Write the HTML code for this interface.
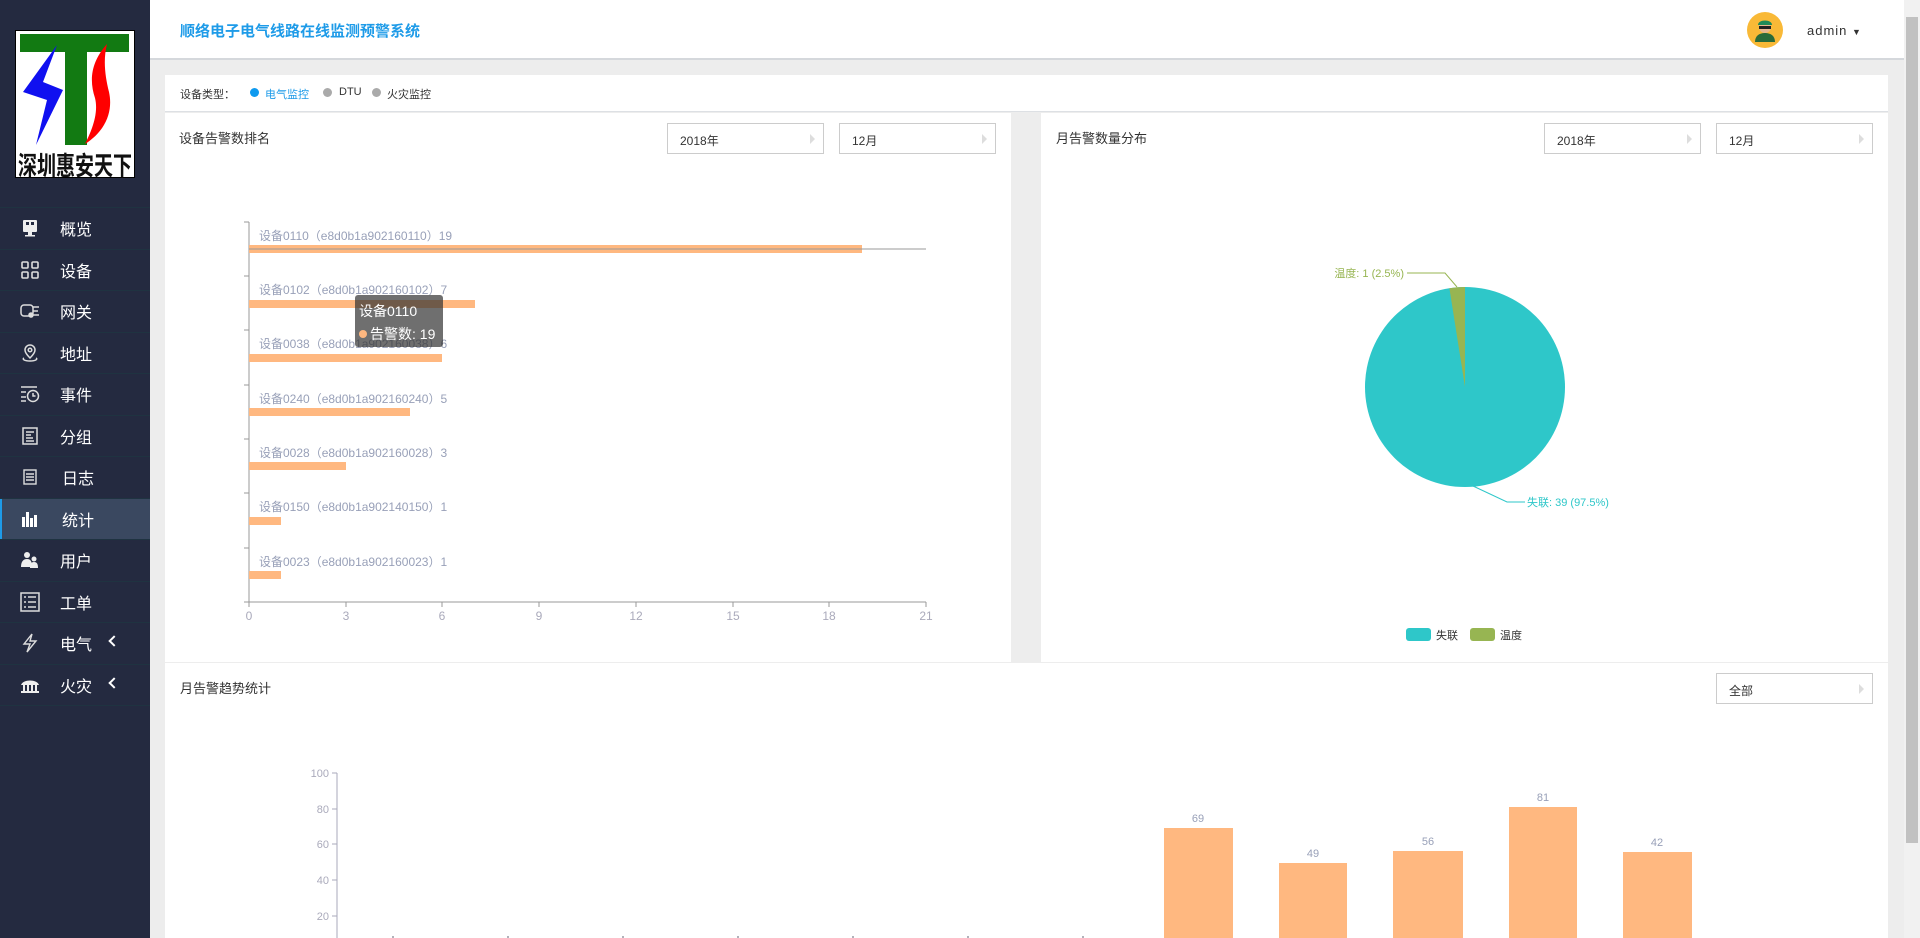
<!DOCTYPE html>
<html><head><meta charset="utf-8"><style>
*{margin:0;padding:0;box-sizing:border-box}
body{width:1920px;height:938px;overflow:hidden;background:#ededed;font-family:"Liberation Sans","Noto Sans CJK SC",sans-serif;position:relative}
.a{position:absolute}
#side{left:0;top:0;width:150px;height:938px;background:#242a40}
.mi{position:absolute;left:0;width:150px;height:41.5px;border-top:1px solid #1f3341;color:#fff;font-size:16px}
.mi span{position:absolute;left:60px;top:8px}
.mi svg{position:absolute;left:20px;top:10px}
.mi.act{background:#3a4860}
.mi.act:before{content:"";position:absolute;left:0;top:0;width:2px;height:100%;background:#1e9be8}
.mi .arr{position:absolute;left:110px;top:14px;width:8px;height:8px;border-left:2px solid #fff;border-bottom:2px solid #fff;transform:rotate(45deg)}
#hdr{left:150px;top:0;width:1754px;height:60px;background:#fff;border-bottom:2px solid #d5d8dc}
.sel{position:absolute;height:31px;border:1px solid #ccc;background:#fff;font-size:12px;color:#333;padding:8px 12px}
.sel:after{content:"";position:absolute;right:8px;top:10px;border-left:5px solid #ddd;border-top:5px solid transparent;border-bottom:5px solid transparent}
.t{font-size:13px;color:#333}
</style></head><body>
<div id="side" class="a">
 <svg class="a" style="left:15px;top:30px" width="120" height="148" viewBox="0 0 120 148">
  <rect x="0.5" y="0.5" width="119" height="147" fill="#fff" stroke="#000"/>
  <rect x="5" y="4" width="109" height="18" fill="#127a12"/>
  <rect x="50" y="20" width="22" height="95" fill="#127a12"/>
  <polygon points="42,15 8,62 32,70 21,115 48,60 28,52" fill="#1010f0"/>
  <path d="M92,14 C76,32 74,50 80,68 C84,84 76,102 70,114 C92,100 98,80 94,62 C90,46 88,30 92,14Z" fill="#f00"/>
  <text x="60" y="145" text-anchor="middle" font-size="26" font-weight="bold" fill="#111" font-family="Noto Sans CJK SC,sans-serif" textLength="114" lengthAdjust="spacingAndGlyphs">深圳惠安天下</text>
 </svg>
 <div class="mi" style="top:207px"><svg width="20" height="20" viewBox="0 0 20 20"><rect x="3" y="2" width="14" height="12" rx="1" fill="#eee"/><rect x="8" y="14" width="4" height="3" fill="#eee"/><rect x="5" y="17" width="10" height="1.5" fill="#eee"/><rect x="6" y="4" width="3" height="3" fill="#242a40"/><rect x="11" y="4" width="3" height="3" fill="#242a40"/></svg><span>概览</span></div>
 <div class="mi" style="top:249px"><svg width="20" height="20" viewBox="0 0 20 20" fill="none" stroke="#ddd" stroke-width="1.6"><rect x="2" y="2" width="6" height="6" rx="1"/><rect x="12" y="2" width="6" height="6" rx="1"/><rect x="2" y="12" width="6" height="6" rx="1"/><rect x="12" y="12" width="6" height="6" rx="1"/></svg><span>设备</span></div>
 <div class="mi" style="top:290px"><svg width="20" height="20" viewBox="0 0 20 20" fill="none" stroke="#ddd" stroke-width="1.5"><rect x="1" y="4" width="12" height="11" rx="3"/><path d="M13 6h6M13 10h5M13 14h6"/><circle cx="11" cy="14" r="2" fill="#ddd"/></svg><span>网关</span></div>
 <div class="mi" style="top:332px"><svg width="20" height="20" viewBox="0 0 20 20" fill="none" stroke="#ddd" stroke-width="1.5"><path d="M10 15C6 11 5 9 5 7a5 5 0 0110 0c0 2-1 4-5 8z"/><circle cx="10" cy="7" r="1.8"/><path d="M4 15c-2 1 0 3 6 3s8-2 6-3"/></svg><span>地址</span></div>
 <div class="mi" style="top:373px"><svg width="20" height="20" viewBox="0 0 20 20" fill="none" stroke="#ddd" stroke-width="1.5"><path d="M1 3h16M1 8h5M1 13h5M1 17h5"/><circle cx="13" cy="12" r="5.5"/><path d="M13 9v3h2.5"/></svg><span>事件</span></div>
 <div class="mi" style="top:415px"><svg width="20" height="20" viewBox="0 0 20 20" fill="none" stroke="#ddd" stroke-width="1.5"><rect x="3" y="2" width="14" height="16"/><path d="M6 6h8M6 9h5M6 12h7M6 15h8"/></svg><span>分组</span></div>
 <div class="mi" style="top:456px"><svg width="20" height="20" viewBox="0 0 20 20" fill="none" stroke="#ddd" stroke-width="1.4"><rect x="4" y="3" width="12" height="14"/><path d="M6 7h8M6 10h8M6 13h8"/></svg><span style="left:62px">日志</span></div>
 <div class="mi act" style="top:498px"><svg width="20" height="20" viewBox="0 0 20 20" fill="#fff"><rect x="2" y="8" width="3" height="10"/><rect x="6" y="3" width="3" height="15"/><rect x="10" y="9" width="3" height="9"/><rect x="14" y="6" width="3" height="12"/></svg><span style="left:62px">统计</span></div>
 <div class="mi" style="top:539px"><svg width="20" height="20" viewBox="0 0 20 20" fill="#eee"><circle cx="7" cy="5" r="3"/><path d="M1 17c0-5 2-8 6-8s5 3 5 8z"/><circle cx="14" cy="9" r="2.5"/><path d="M10 18c0-4 1-6 4-6s4 2 4 6z"/></svg><span>用户</span></div>
 <div class="mi" style="top:581px"><svg width="20" height="20" viewBox="0 0 20 20" fill="none" stroke="#ddd" stroke-width="1.5"><rect x="1" y="1" width="18" height="18"/><path d="M4 5h2M8 5h8M4 10h2M8 10h8M4 15h2M8 15h8"/></svg><span>工单</span></div>
 <div class="mi" style="top:622px"><svg width="20" height="20" viewBox="0 0 20 20" fill="none" stroke="#ddd" stroke-width="1.4"><path d="M12 1L4 11h6l-3 8 9-11h-6z"/></svg><span>电气</span><b class="arr"></b></div>
 <div class="mi" style="top:664px"><svg width="20" height="20" viewBox="0 0 20 20" fill="#eee"><path d="M1 10c2-6 16-6 18 0z"/><rect x="3" y="10" width="2" height="6"/><rect x="7" y="10" width="2" height="6"/><rect x="11" y="10" width="2" height="6"/><rect x="15" y="10" width="2" height="6"/><rect x="1" y="16" width="18" height="2"/></svg><span>火灾</span><b class="arr"></b></div>
 <div class="mi" style="top:705px;height:1px"></div>
</div>
<div id="hdr" class="a">
 <div class="a" style="left:30px;top:20px;font-size:15px;font-weight:bold;color:#1e9be8">顺络电子电气线路在线监测预警系统</div>
 <svg class="a" style="left:1597px;top:12px" width="36" height="36" viewBox="0 0 36 36"><circle cx="18" cy="18" r="18" fill="#f9b937"/><path d="M8 30c0-6 4-9 10-9s10 3 10 9z" fill="#2a6b3a"/><circle cx="18" cy="15" r="6" fill="#e9b88f"/><path d="M11 13c0-6 14-6 14 0z" fill="#1e8a57"/><rect x="12" y="14" width="12" height="3" fill="#222"/></svg>
 <div class="a" style="left:1657px;top:23px;font-size:13px;color:#333;letter-spacing:1px">admin <span style="font-size:9px">▼</span></div>
</div>
<div class="a" style="left:1904px;top:0;width:16px;height:938px;background:#f1f1f1"></div>
<div class="a" style="left:1906px;top:17px;width:12px;height:826px;background:#c1c1c1"></div>
<div class="a" style="left:165px;top:75px;width:1723px;height:37px;background:#fff;border-bottom:1px solid #dde0e4;font-size:11px;color:#333">
 <span class="a" style="left:15px;top:11px">设备类型：</span>
 <span class="a" style="left:85px;top:13px;width:9px;height:9px;border-radius:50%;background:#0e9aef"></span><span class="a" style="left:100px;top:11px;color:#1e9be8">电气监控</span>
 <span class="a" style="left:158px;top:13px;width:9px;height:9px;border-radius:50%;background:#aaa"></span><span class="a" style="left:174px;top:11px">DTU</span>
 <span class="a" style="left:207px;top:13px;width:9px;height:9px;border-radius:50%;background:#aaa"></span><span class="a" style="left:222px;top:11px">火灾监控</span>
</div>
<div class="a" style="left:165px;top:113px;width:846px;height:549px;background:#fff">
 <div class="a t" style="left:14px;top:15px">设备告警数排名</div>
 <div class="sel" style="left:502px;top:10px;width:157px">2018年</div>
 <div class="sel" style="left:674px;top:10px;width:157px">12月</div>
</div>
<svg class="a" style="left:165px;top:113px" width="846" height="549" font-family="Liberation Sans,Noto Sans CJK SC,sans-serif" font-size="12">
 <g stroke="#999" stroke-width="1">
  <line x1="84" y1="109" x2="84" y2="489"/><line x1="84" y1="489" x2="761" y2="489"/>
  <line x1="79" y1="109" x2="84" y2="109"/><line x1="79" y1="163" x2="84" y2="163"/><line x1="79" y1="217" x2="84" y2="217"/><line x1="79" y1="272" x2="84" y2="272"/><line x1="79" y1="326" x2="84" y2="326"/><line x1="79" y1="380" x2="84" y2="380"/><line x1="79" y1="435" x2="84" y2="435"/><line x1="79" y1="489" x2="84" y2="489"/>
  <line x1="84" y1="489" x2="84" y2="494"/><line x1="181" y1="489" x2="181" y2="494"/><line x1="277" y1="489" x2="277" y2="494"/><line x1="374" y1="489" x2="374" y2="494"/><line x1="471" y1="489" x2="471" y2="494"/><line x1="568" y1="489" x2="568" y2="494"/><line x1="664" y1="489" x2="664" y2="494"/><line x1="761" y1="489" x2="761" y2="494"/>
 </g>
 <g fill="#ffb880">
  <rect x="84" y="132" width="613" height="8"/><rect x="84" y="187" width="226" height="8"/><rect x="84" y="241" width="193" height="8"/><rect x="84" y="295" width="161" height="8"/><rect x="84" y="349" width="97" height="8"/><rect x="84" y="404" width="32" height="8"/><rect x="84" y="458" width="32" height="8"/>
 </g>
 <line x1="84" y1="136" x2="761" y2="136" stroke="#999"/>
 <g fill="#98a0b8">
  <text x="94" y="127">设备0110（e8d0b1a902160110）19</text>
  <text x="94" y="181">设备0102（e8d0b1a902160102）7</text>
  <text x="94" y="235">设备0038（e8d0b1a902160038）6</text>
  <text x="94" y="290">设备0240（e8d0b1a902160240）5</text>
  <text x="94" y="344">设备0028（e8d0b1a902160028）3</text>
  <text x="94" y="398">设备0150（e8d0b1a902140150）1</text>
  <text x="94" y="453">设备0023（e8d0b1a902160023）1</text>
 </g>
 <g fill="#aab" text-anchor="middle"><text x="84" y="507">0</text><text x="181" y="507">3</text><text x="277" y="507">6</text><text x="374" y="507">9</text><text x="471" y="507">12</text><text x="568" y="507">15</text><text x="664" y="507">18</text><text x="761" y="507">21</text></g>
 <rect x="190" y="182" width="88" height="52" rx="3" fill="rgba(50,50,50,0.7)"/>
 <text x="194" y="203" fill="#fff" font-size="14">设备0110</text>
 <circle cx="198" cy="221" r="4" fill="#ffb880"/>
 <text x="205" y="226" fill="#fff" font-size="14">告警数: 19</text>
</svg>
<div class="a" style="left:1041px;top:113px;width:847px;height:549px;background:#fff">
 <div class="a t" style="left:15px;top:15px">月告警数量分布</div>
 <div class="sel" style="left:503px;top:10px;width:157px">2018年</div>
 <div class="sel" style="left:675px;top:10px;width:157px">12月</div>
</div>
<svg class="a" style="left:1041px;top:113px" width="847" height="549" font-family="Liberation Sans,Noto Sans CJK SC,sans-serif" font-size="11">
 <circle cx="424" cy="274" r="100" fill="#2ec7c9"/>
 <path d="M424 274 L424 174 A100 100 0 0 0 408.4 175.2 Z" fill="#97b552"/>
 <polyline points="416,174 404,160 366,160" fill="none" stroke="#97b552"/>
 <text x="363" y="164" fill="#97b552" text-anchor="end">温度: 1 (2.5%)</text>
 <polyline points="432,373 466,389 484,389" fill="none" stroke="#2ec7c9"/>
 <text x="486" y="393" fill="#2ec7c9">失联: 39 (97.5%)</text>
 <rect x="365" y="515" width="25" height="13" rx="3" fill="#2ec7c9"/><text x="395" y="526" fill="#333">失联</text>
 <rect x="429" y="515" width="25" height="13" rx="3" fill="#97b552"/><text x="459" y="526" fill="#333">温度</text>
</svg>
<div class="a" style="left:165px;top:663px;width:1723px;height:275px;background:#fff">
 <div class="a t" style="left:15px;top:15px">月告警趋势统计</div>
 <div class="sel" style="left:1551px;top:10px;width:157px">全部</div>
</div>
<svg class="a" style="left:165px;top:663px" width="1723" height="275" font-family="Liberation Sans,Noto Sans CJK SC,sans-serif" font-size="11">
 <line x1="172" y1="110" x2="172" y2="275" stroke="#aab"/>
 <g stroke="#aab"><line x1="167" y1="110" x2="172" y2="110"/><line x1="167" y1="146" x2="172" y2="146"/><line x1="167" y1="181" x2="172" y2="181"/><line x1="167" y1="217" x2="172" y2="217"/><line x1="167" y1="253" x2="172" y2="253"/></g>
 <g fill="#aab" text-anchor="end"><text x="164" y="114">100</text><text x="164" y="150">80</text><text x="164" y="185">60</text><text x="164" y="221">40</text><text x="164" y="257">20</text></g>
 <g fill="#ffb880"><rect x="999" y="165" width="69" height="110"/><rect x="1114" y="200" width="68" height="75"/><rect x="1228" y="188" width="70" height="87"/><rect x="1344" y="144" width="68" height="131"/><rect x="1458" y="189" width="69" height="86"/></g>
 <g fill="#98a0b8" text-anchor="middle"><text x="1033" y="159">69</text><text x="1148" y="194">49</text><text x="1263" y="182">56</text><text x="1378" y="138">81</text><text x="1492" y="183">42</text></g>
 <g stroke="#667"><line x1="228" y1="273" x2="228" y2="275"/><line x1="343" y1="273" x2="343" y2="275"/><line x1="458" y1="273" x2="458" y2="275"/><line x1="573" y1="273" x2="573" y2="275"/><line x1="688" y1="273" x2="688" y2="275"/><line x1="803" y1="273" x2="803" y2="275"/><line x1="918" y1="273" x2="918" y2="275"/></g>
</svg>
</body></html>
